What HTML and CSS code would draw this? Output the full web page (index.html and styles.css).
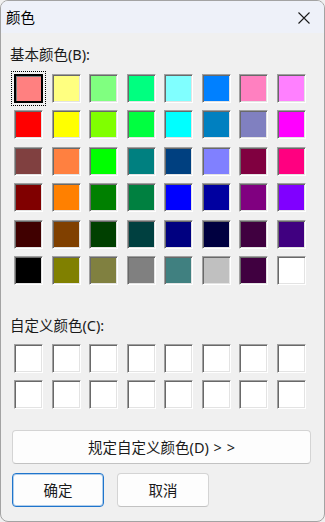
FILE: index.html
```html
<!DOCTYPE html>
<html lang="zh-CN">
<head>
    <meta charset="UTF-8">
    <meta name="viewport" content="width=device-width, initial-scale=1.0">
    <title>颜色</title>
    <link rel="stylesheet" href="styles.css">
</head>
<body>
    <div class="window">
        <!-- Title bar -->
        <header class="title_bar">
            <span class="title">颜色</span>
            <svg class="close_icon" width="12" height="12" viewBox="0 0 12 12">
                <path d="M0.5 0.5 L11.5 11.5 M11.5 0.5 L0.5 11.5" stroke="#1a1a1a" stroke-width="1.1" fill="none"/>
            </svg>
        </header>

        <main class="content">
            <p class="label">基本颜色(B):</p>
            <div class="swatch_grid basic">
                <span class="swatch selected" style="background:#ff8080"></span>
                <span class="swatch" style="background:#ffff80"></span>
                <span class="swatch" style="background:#80ff80"></span>
                <span class="swatch" style="background:#00ff80"></span>
                <span class="swatch" style="background:#80ffff"></span>
                <span class="swatch" style="background:#0080ff"></span>
                <span class="swatch" style="background:#ff80c0"></span>
                <span class="swatch" style="background:#ff80ff"></span>

                <span class="swatch" style="background:#ff0000"></span>
                <span class="swatch" style="background:#ffff00"></span>
                <span class="swatch" style="background:#80ff00"></span>
                <span class="swatch" style="background:#00ff40"></span>
                <span class="swatch" style="background:#00ffff"></span>
                <span class="swatch" style="background:#0080c0"></span>
                <span class="swatch" style="background:#8080c0"></span>
                <span class="swatch" style="background:#ff00ff"></span>

                <span class="swatch" style="background:#804040"></span>
                <span class="swatch" style="background:#ff8040"></span>
                <span class="swatch" style="background:#00ff00"></span>
                <span class="swatch" style="background:#008080"></span>
                <span class="swatch" style="background:#004080"></span>
                <span class="swatch" style="background:#8080ff"></span>
                <span class="swatch" style="background:#800040"></span>
                <span class="swatch" style="background:#ff0080"></span>

                <span class="swatch" style="background:#800000"></span>
                <span class="swatch" style="background:#ff8000"></span>
                <span class="swatch" style="background:#008000"></span>
                <span class="swatch" style="background:#008040"></span>
                <span class="swatch" style="background:#0000ff"></span>
                <span class="swatch" style="background:#0000a0"></span>
                <span class="swatch" style="background:#800080"></span>
                <span class="swatch" style="background:#8000ff"></span>

                <span class="swatch" style="background:#400000"></span>
                <span class="swatch" style="background:#804000"></span>
                <span class="swatch" style="background:#004000"></span>
                <span class="swatch" style="background:#004040"></span>
                <span class="swatch" style="background:#000080"></span>
                <span class="swatch" style="background:#000040"></span>
                <span class="swatch" style="background:#400040"></span>
                <span class="swatch" style="background:#400080"></span>

                <span class="swatch" style="background:#000000"></span>
                <span class="swatch" style="background:#808000"></span>
                <span class="swatch" style="background:#808040"></span>
                <span class="swatch" style="background:#808080"></span>
                <span class="swatch" style="background:#408080"></span>
                <span class="swatch" style="background:#c0c0c0"></span>
                <span class="swatch" style="background:#400040"></span>
                <span class="swatch" style="background:#ffffff"></span>
            </div>

            <p class="label custom_label">自定义颜色(C):</p>
            <div class="swatch_grid custom">
                <span class="swatch"></span><span class="swatch"></span><span class="swatch"></span><span class="swatch"></span>
                <span class="swatch"></span><span class="swatch"></span><span class="swatch"></span><span class="swatch"></span>
                <span class="swatch"></span><span class="swatch"></span><span class="swatch"></span><span class="swatch"></span>
                <span class="swatch"></span><span class="swatch"></span><span class="swatch"></span><span class="swatch"></span>
            </div>

            <button class="btn wide_btn">规定自定义颜色(D) &gt; &gt;</button>

            <div class="button_row">
                <button class="btn default_btn">确定</button>
                <button class="btn">取消</button>
            </div>
        </main>
    </div>
</body>
</html>
```

FILE: styles.css
```css
body {
    margin: 0;
    padding: 0;
    background-color: #f0f0f0;
    font-family: "Noto Sans", "Noto Sans CJK SC", sans-serif;
    color: #000;
}

.window {
    width: 325px;
    height: 522px;
    box-sizing: border-box;
    border: 1px solid #a3a3a3;
    border-radius: 8px;
    overflow: hidden;
    background-color: #f0f0f0;
}

.title_bar {
    height: 32px;
    background-color: #eef1f9;
    display: flex;
    align-items: center;
    justify-content: space-between;
    padding: 0 14px 0 5px;
}

.title {
    font-size: 14.5px;
    line-height: 20px;
    margin-top: -1px;
}

.close_icon {
    display: block;
    margin-top: 1px;
}

.content {
    padding: 11px 0 0 9px;
}

.label {
    margin: 0;
    font-size: 14.5px;
    line-height: 20px;
    color: #1a1a1a;
}

.swatch_grid {
    display: grid;
    grid-template-columns: repeat(8, 29px);
    column-gap: 8.57px;
    margin-left: 4px;
}

.basic {
    row-gap: 7.4px;
    margin-top: 10px;
}

.custom {
    row-gap: 7px;
    margin-top: 9px;
}

.custom_label {
    margin-top: 30px;
}

.swatch {
    position: relative;
    width: 29px;
    height: 29px;
    box-sizing: border-box;
    background-color: #fff;
    border: 1px solid;
    border-color: #a0a0a0 #ffffff #ffffff #a0a0a0;
    box-shadow: inset 1px 1px 0 #696969, inset -1px -1px 0 #e3e3e3;
}

.swatch.selected {
    border-color: #000;
    box-shadow: inset 0 0 0 1px #000, inset 2px 2px 0 #808080;
    outline: 1px dotted #000;
    outline-offset: 2px;
}

.btn {
    font-family: "Noto Sans", "Noto Sans CJK SC", sans-serif;
    font-size: 14.5px;
    color: #1a1a1a;
    background-color: #fdfdfd;
    border: 1px solid #d4d4d4;
    border-bottom-color: #c2c2c2;
    border-radius: 4px;
    height: 34px;
    padding: 0;
    cursor: pointer;
}

.wide_btn {
    display: block;
    width: 299px;
    margin: 21px 0 0 2px;
    word-spacing: 1px;
}

.button_row {
    display: flex;
    gap: 13px;
    margin: 9px 0 0 2px;
}

.button_row .btn {
    width: 92px;
}

.default_btn {
    border-color: #1f75cc;
    box-shadow: inset 0 0 0 1px rgba(31, 117, 204, 0.35);
}
```
